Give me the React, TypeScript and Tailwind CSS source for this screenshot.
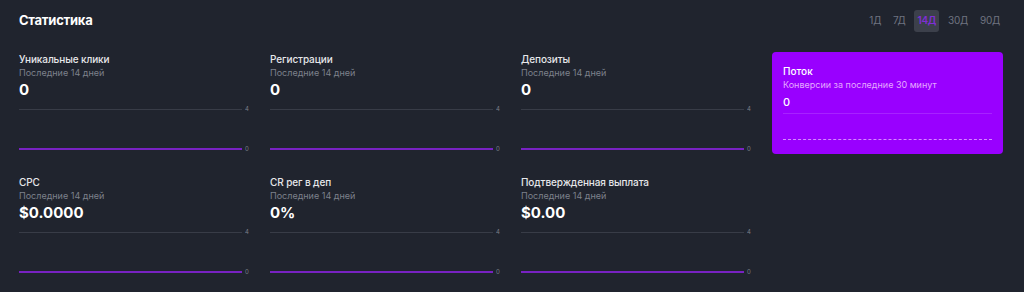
import React from "react";

const METRICS = [
  { title: "Уникальные клики", value: "0" },
  { title: "Регистрации", value: "0" },
  { title: "Депозиты", value: "0" },
  { title: "CPC", value: "$0.0000" },
  { title: "CR рег в деп", value: "0%" },
  { title: "Подтвержденная выплата", value: "$0.00" },
];

const PERIODS = ["1Д", "7Д", "14Д", "30Д", "90Д"];

function MiniChart() {
  return (
    <div className="mt-[4px] flex h-[50px] shrink-0 flex-col justify-between py-[1px]">
      <div className="flex items-center">
        <span className="h-px flex-1 bg-[#383c47]" />
        <span className="ml-[3px] w-[5px] text-[6px] leading-[8px] text-[#7b7f8a]">4</span>
      </div>
      <div className="flex items-center">
        <span className="h-[2px] flex-1 bg-[#7822c2]" />
        <span className="ml-[3px] w-[5px] text-[6px] leading-[8px] text-[#7b7f8a]">0</span>
      </div>
    </div>
  );
}

function MetricCard({ title, value }: { title: string; value: string }) {
  return (
    <div className="flex flex-col">
      <div className="text-[10px] font-medium leading-[14px] tracking-[-0.01em] text-[#e6e7ea]">{title}</div>
      <div className="text-[9px] leading-[14px] text-[#7d818c]">Последние 14 дней</div>
      <div className="text-[15px] font-bold leading-[20px] text-white">{value}</div>
      <MiniChart />
    </div>
  );
}

function FlowCard() {
  return (
    <div className="flex flex-col rounded-[4px] bg-[#9900ff] px-[11px] pt-[12px]">
      <div className="text-[10px] font-medium leading-[14px] text-white">Поток</div>
      <div className="text-[9px] leading-[14px] text-[#e5a9ff]">Конверсии за последние 30 минут</div>
      <div className="mt-[2px] text-[11px] font-medium leading-[16px] text-white">0</div>
      <div className="mt-[3px] h-px bg-[#a722ff]" />
      <div className="mt-[25px] border-t border-dashed border-[#d68cff]" />
    </div>
  );
}

export default function App() {
  const cards = METRICS.map((m) => <MetricCard key={m.title} {...m} />);
  return (
    <div
      className="h-[292px] w-[1024px] overflow-hidden bg-[#20242e] pl-[19px] pr-[21px]"
      style={{ fontFamily: "Inter, 'Noto Sans', sans-serif" }}
    >
      <div className="flex h-[41px] items-center justify-between">
        <h1 className="text-[13px] font-bold tracking-[-0.02em] text-white">Статистика</h1>
        <div className="flex items-center gap-[6px]">
          {PERIODS.map((p) => (
            <button
              key={p}
              type="button"
              className={
                p === "14Д"
                  ? "h-[22px] rounded-[3px] bg-[#3c404b] px-[3px] text-[10px] font-semibold tracking-tight text-[#7f2fd6]"
                  : "h-[22px] px-[3px] text-[10px] tracking-tight text-[#6f7380]"
              }
            >
              {p}
            </button>
          ))}
        </div>
      </div>
      <div className="mt-[11px] grid grid-cols-4 grid-rows-[102px_102px] gap-x-5 gap-y-[21px]">
        {cards.slice(0, 3)}
        <FlowCard />
        {cards.slice(3)}
      </div>
    </div>
  );
}
